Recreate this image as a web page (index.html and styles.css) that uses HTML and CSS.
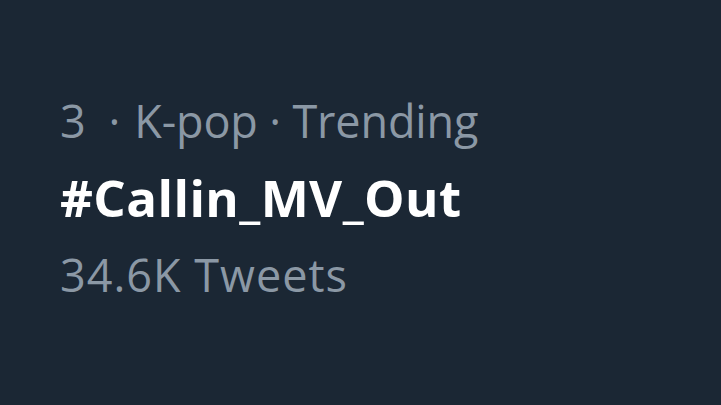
FILE: index.html
```html
<!DOCTYPE html>
<html>
<head>
<meta charset="utf-8">
<link rel="stylesheet" href="styles.css">
</head>
<body>
<div class="trend">
  <div class="meta">3<span class="sep">·</span>K-pop · Trending</div>
  <div class="tag">#Callin_MV_Out</div>
  <div class="count">34.6K Tweets</div>
</div>
</body>
</html>
```
FILE: styles.css
```css
html, body {
  margin: 0;
  padding: 0;
  width: 721px;
  height: 405px;
  background: #1b2734;
  overflow: hidden;
}
.trend {
  padding: 90.5px 0 0 60px;
  font-family: "Open Sans", "Liberation Sans", sans-serif;
  display: flex;
  flex-direction: column;
}
.meta {
  color: #8b98a5;
  font-size: 45px;
  line-height: 60px;
  letter-spacing: -0.15px;
}
.sep {
  padding: 0 14px 0 23px;
}
.tag {
  color: #ffffff;
  font-size: 51px;
  font-weight: bold;
  line-height: 60px;
  letter-spacing: 0.4px;
  margin-top: 16px;
}
.count {
  color: #8b98a5;
  font-size: 45px;
  line-height: 60px;
  letter-spacing: 1px;
  margin-top: 18px;
}
```
